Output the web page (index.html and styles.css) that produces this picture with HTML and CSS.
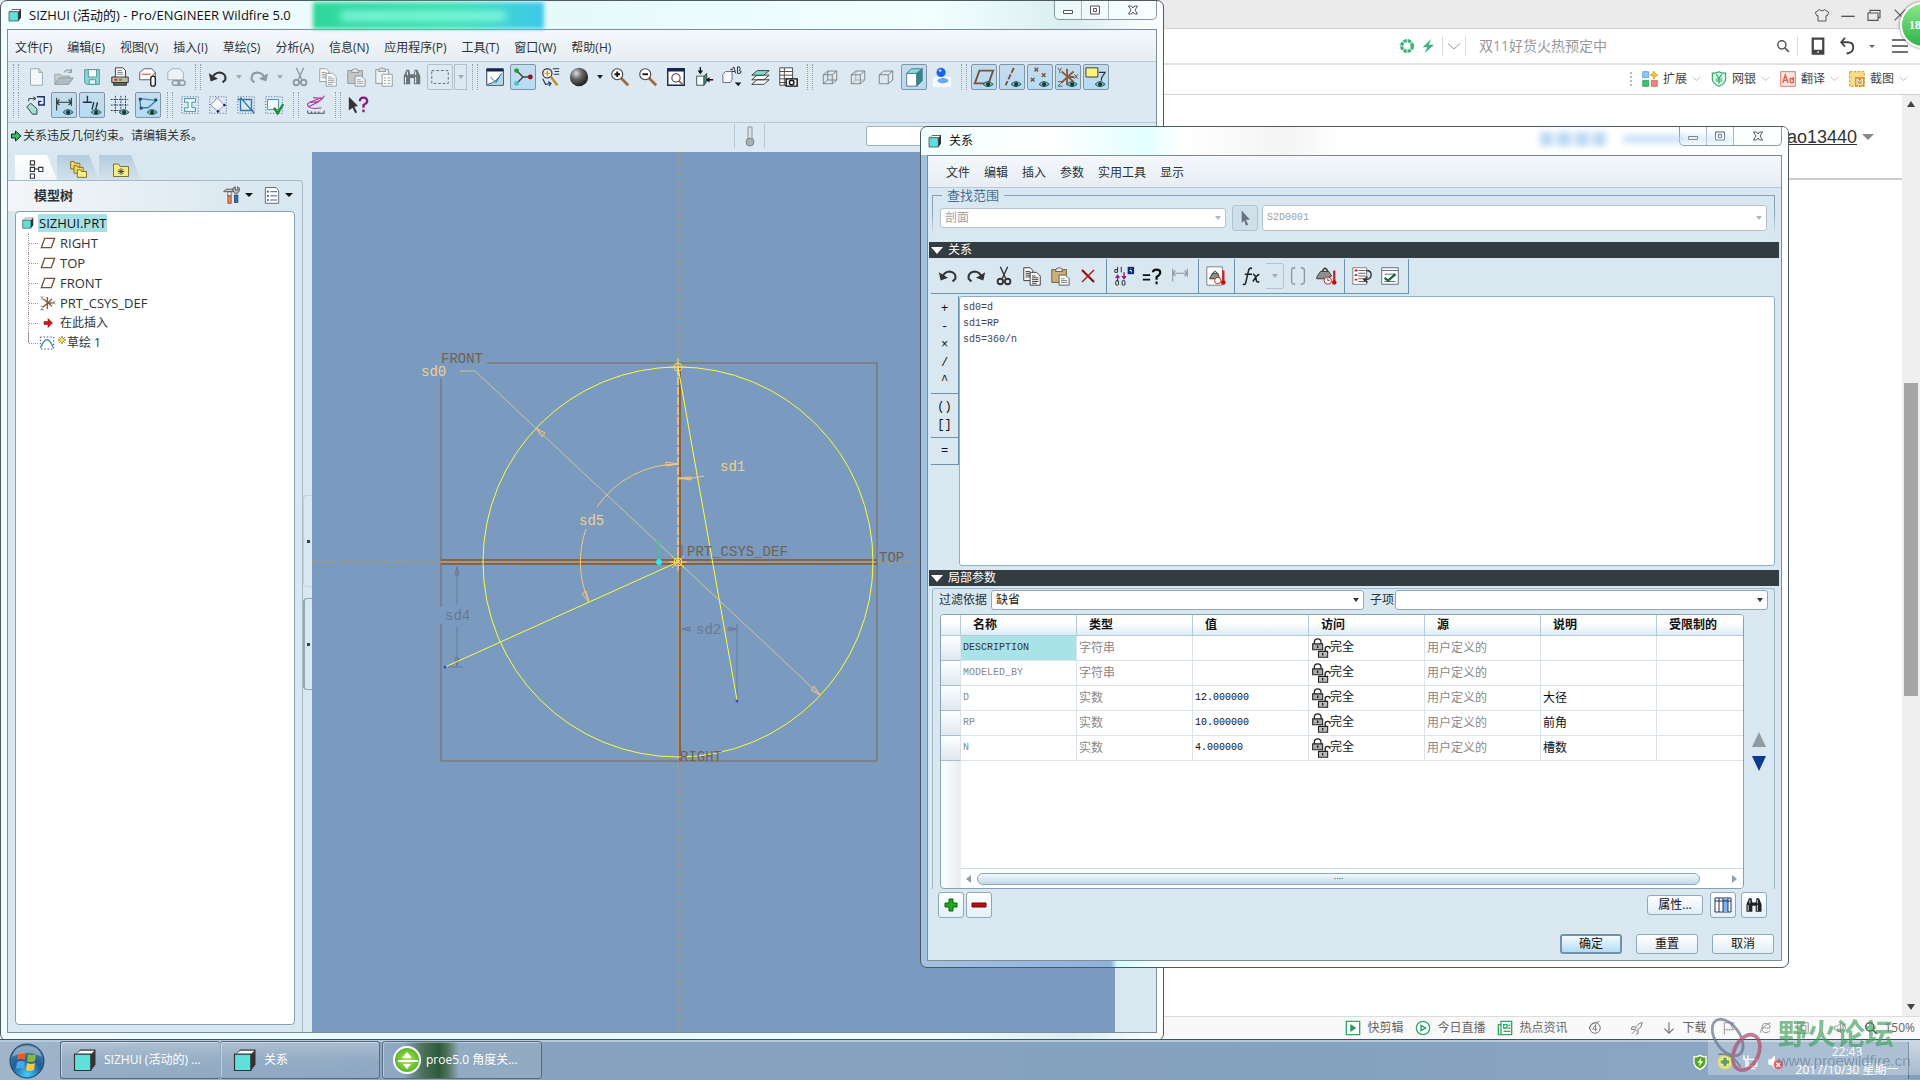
FILE: index.html
```html
<!DOCTYPE html>
<html lang="zh-CN">

<head>
    <meta charset="utf-8">
    <title>SIZHUI - Pro/ENGINEER Wildfire 5.0</title>
    <link rel="stylesheet" href="styles.css">
</head>

<body>
    <!-- icon set, every symbol is drawn on a 24px grid -->
    <svg class="sprite" aria-hidden="true">
        <defs>
            <radialGradient id="g-ball" cx=".35" cy=".3" r=".8">
                <stop offset="0" stop-color="#ddd" />
                <stop offset=".4" stop-color="#666" />
                <stop offset="1" stop-color="#111" />
            </radialGradient>
            <radialGradient id="g-orb" cx=".5" cy=".9" r=".9">
                <stop offset="0" stop-color="#3fd0ff" />
                <stop offset=".5" stop-color="#1f5e96" />
                <stop offset="1" stop-color="#5d86a8" />
            </radialGradient>
            <radialGradient id="g-green" cx=".5" cy=".5" r=".6">
                <stop offset="0" stop-color="#b6ee5c" />
                <stop offset="1" stop-color="#3fa41c" />
            </radialGradient>
        </defs>
        <symbol id="eye" viewBox="0 0 24 24">
            <path d="M11 20q5-6 11 0q-6 5-11 0z" fill="#8db6b6" stroke="#1d4d4d" />
            <circle cx="16.500" cy="20" r="2.200" fill="#0f3b3b" />
        </symbol>
        <symbol id="cube" viewBox="0 0 24 24">
            <path d="M4 7l4-4h13v13l-4 5z" fill="#333" />
            <path d="M4 7l4-3h12l-3 3z" fill="#fff" />
            <path d="M3 7h14v14H3z" fill="#5fe0dc" stroke="#333" />
        </symbol>
        <symbol id="new" viewBox="0 0 24 24">
            <path d="M6 3h9l4 4v14H6zM15 3v4h4" fill="#f4f8fa" stroke="#9aa5ac" />
        </symbol>
        <symbol id="open" viewBox="0 0 24 24">
            <path d="M2 20V9h6l2 2h8v2" fill="#c5ccd0" stroke="#98a2a8" />
            <path d="M2 20l5-7h15l-5 7z" fill="#b3bcc1" stroke="#8d979d" />
            <path d="M12 7q4-5 8-1M20 3v4h-4" fill="none" stroke="#98a2a8" stroke-width="1.500" />
        </symbol>
        <symbol id="save" viewBox="0 0 24 24">
            <path d="M4 4h16v16H6l-2-2z" fill="#8fd6d6" stroke="#4a8f95" />
            <path d="M8 4h9v8H8z" fill="#fff" stroke="#4a8f95" />
            <path d="M9 15h7v5H9z" fill="#dff" stroke="#4a8f95" />
        </symbol>
        <symbol id="print" viewBox="0 0 24 24">
            <path d="M7 12V2h8l3 3v7" fill="#fff" stroke="#333" />
            <path d="M9 5h5M9 7h6M9 9h6" stroke="#777" />
            <path d="M3 12h18v6H3z" fill="#c3b9a2" stroke="#333" />
            <path d="M5 18h14v3H5z" fill="#6c6450" stroke="#333" />
            <path d="M6 15h3" stroke="#c22" stroke-width="2" />
            <path d="M11 15h3" stroke="#2a2" stroke-width="2" />
        </symbol>
        <symbol id="mail" viewBox="0 0 24 24">
            <path d="M3 15V7l5-4h8l4 4v8z" fill="#fff" stroke="#555" />
            <path d="M5 9h10" stroke="#c33" />
            <path d="M20 7l-5 6" stroke="#555" />
            <rect x="15" y="11" width="5" height="11" rx="2.500" fill="#fff" stroke="#222" stroke-width="1.500" />
        </symbol>
        <symbol id="maillink" viewBox="0 0 24 24">
            <path d="M3 15V7l5-4h8l4 4v8z" fill="#edf2f5" stroke="#a2abb1" />
            <rect x="8" y="16" width="8" height="5" rx="2.500" fill="none" stroke="#8d979d" stroke-width="1.500" />
            <rect x="14" y="16" width="8" height="5" rx="2.500" fill="none" stroke="#8d979d" stroke-width="1.500" />
        </symbol>
        <symbol id="undo" viewBox="0 0 24 24">
            <path d="M5 14Q8 7 14 7q7 1 6 8l-3 3" fill="none" stroke="currentColor" stroke-width="2.200" />
            <path d="M2 8l2 9 8-3z" fill="currentColor" />
        </symbol>
        <symbol id="redo" viewBox="0 0 24 24">
            <path d="M19 14Q16 7 10 7q-7 1-6 8l3 3" fill="none" stroke="currentColor" stroke-width="2.200" />
            <path d="M22 8l-2 9-8-3z" fill="currentColor" />
        </symbol>
        <symbol id="cut" viewBox="0 0 24 24">
            <path d="M8 2l6 13M16 2l-6 13" stroke="currentColor" stroke-width="1.500" />
            <circle cx="8" cy="18" r="3" class="tint" />
            <circle cx="16" cy="18" r="3" class="tint" />
        </symbol>
        <symbol id="copy" viewBox="0 0 24 24">
            <path d="M3 3h7l3 3v11H3z" fill="#fff" stroke="currentColor" />
            <path d="M5 7h5M5 9h6M5 11h6M5 13h6" stroke="currentColor" />
            <path d="M10 8h7l4 4v10H10z" fill="#fff" stroke="currentColor" />
            <path d="M12 12h4M12 14h7M12 16h7M12 18h7M12 20h5" stroke="currentColor" />
        </symbol>
        <symbol id="paste" viewBox="0 0 24 24">
            <path d="M3 5h16v14H3z" fill="#c9b074" stroke="#655d44" />
            <path d="M7 7q0-4 4-4t4 4z" fill="#eee" stroke="#555" />
            <path d="M11 11h7l4 4v7H11z" fill="#fff" stroke="#555" />
            <path d="M13 15h4M13 17h7M13 19h7" stroke="#777" />
        </symbol>
        <symbol id="pastespecial" viewBox="0 0 24 24">
            <path d="M3 4h14v15H3z" fill="#f0f3f5" stroke="#8d979d" />
            <path d="M6 6q0-4 4-4t4 4z" fill="#ddd" stroke="#8d979d" />
            <path d="M10 9h11v13H10z" fill="#fff" stroke="#8d979d" />
            <path d="M12 13h2M12 16h2M12 19h2M16 13h3M16 16h3M16 19h3" stroke="#8d979d" />
        </symbol>
        <symbol id="find" viewBox="0 0 24 24">
            <path d="M3 20v-9l3-7h3l1 5h4l1-5h3l3 7v9h-7v-7h-4v7z" fill="currentColor" />
            <path d="M5 12v7M16 12v7M7 6v4M16 6v4" stroke="#fff" />
        </symbol>
        <symbol id="selbox" viewBox="0 0 24 24">
            <path d="M3 5h18v14H3z" fill="none" stroke="#5c666c" stroke-dasharray="3 2" />
        </symbol>
        <symbol id="sketch" viewBox="0 0 24 24">
            <path d="M3 3h18v18H3z" fill="#fff" stroke="#15254d" />
            <path d="M3 3h18v3H3z" fill="#15254d" />
            <path d="M4 20Q15 17 20 7v13z" fill="#a8d8ec" />
            <path d="M7 12l6 6 6-10M4 20q9-2 12-8" fill="none" stroke="#235f8c" />
        </symbol>
        <symbol id="nodes" viewBox="0 0 24 24">
            <path d="M5 5l7 7h8M5 19l7-7" fill="none" stroke="#444" stroke-width="1.500" />
            <circle cx="5" cy="5" r="2.600" fill="#1d9f3c" />
            <circle cx="5" cy="19" r="2.600" fill="#3fc7c7" />
            <circle cx="20" cy="12" r="2.600" fill="#991111" />
        </symbol>
        <symbol id="look" viewBox="0 0 24 24">
            <circle cx="8" cy="8" r="5" fill="#f6fafc" stroke="#444" stroke-width="1.500" />
            <path d="M8 5v6M5 8h6" stroke="#d39a26" stroke-width="1.500" />
            <path d="M12 12l7 9" stroke="#b98a2a" stroke-width="2.500" />
            <path d="M14 3h7M16 6h5M15 9h6M3 14l3 6 6-1M9 17l3 2-2 3" stroke="#223a66" fill="none" stroke-width="1.300" />
        </symbol>
        <symbol id="sphere" viewBox="0 0 24 24">
            <circle cx="12" cy="12" r="10" fill="url(#g-ball)" />
        </symbol>
        <symbol id="zoomin" viewBox="0 0 24 24">
            <path d="M13 13l8 8" stroke="#9a6a42" stroke-width="3" />
            <circle cx="9" cy="9" r="6" fill="#fff" stroke="#444" stroke-width="1.200" />
            <path d="M6 9h6M9 6v6" stroke="#111" stroke-width="2" />
        </symbol>
        <symbol id="zoomout" viewBox="0 0 24 24">
            <path d="M13 13l8 8" stroke="#9a6a42" stroke-width="3" />
            <circle cx="9" cy="9" r="6" fill="#fff" stroke="#444" stroke-width="1.200" />
            <path d="M6 9h6" stroke="#111" stroke-width="2" />
        </symbol>
        <symbol id="fit" viewBox="0 0 24 24">
            <path d="M3 3h18v18H3z" fill="#fff" stroke="#15254d" stroke-width="1.500" />
            <path d="M3 3h18v3H3z" fill="#15254d" />
            <path d="M15 16l4 4" stroke="#9a6a42" stroke-width="2" />
            <circle cx="12" cy="13" r="4.500" fill="#fff" stroke="#444" stroke-width="1.200" />
        </symbol>
        <symbol id="orient" viewBox="0 0 24 24">
            <path d="M4 11h8v10H4z" fill="#eff" stroke="#444" />
            <path d="M12 11l3-3v9l-3 4z" fill="#3b9189" stroke="#444" />
            <path d="M8 1v7M22 15h-6" stroke="#111" stroke-width="1.500" />
            <path d="M5 5h6l-3 4zM18 12v6l-4-3z" fill="#111" />
        </symbol>
        <symbol id="views" viewBox="0 0 24 24">
            <path d="M2 9l3-3h7v9l-2 3H2z" fill="#f6fafc" stroke="#667" />
            <path d="M12 3l2-2 2 7M12 6h3M18 1v7h3l1-2-2-1 1-2-1-2zM10 4h3" fill="none" stroke="#222" />
            <path d="M15 18h7l-3 4z" fill="#111" />
        </symbol>
        <symbol id="layers" viewBox="0 0 24 24">
            <path d="M3 20l6-5h13l-6 5zM3 15l6-5h13l-6 5z" fill="#fff" stroke="#333" />
            <path d="M3 10l6-5h13l-6 5z" fill="#7fdccf" stroke="#333" />
        </symbol>
        <symbol id="capture" viewBox="0 0 24 24">
            <path d="M3 2h14v19H3zM3 6h14M3 10h14M3 14h14M3 18h14M8 2v19" fill="#fff" stroke="#444" />
            <path d="M10 14h12v8H10z" fill="#eee" stroke="#111" stroke-width="1.500" />
            <circle cx="16" cy="18" r="2.500" fill="#fff" stroke="#111" stroke-width="1.500" />
        </symbol>
        <symbol id="wire1" viewBox="0 0 24 24">
            <path d="M3 9h12v12H3zM9 4h12v12H9zM3 9l6-5M15 9l6-5M15 21l6-5M3 21l6-5" fill="none" stroke="#666" />
        </symbol>
        <symbol id="wire2" viewBox="0 0 24 24">
            <path d="M3 9h12v12H3zM3 9l6-5h12v12l-6 5M15 9l6-5" fill="none" stroke="#666" />
            <path d="M9 4v12h12M3 21l6-5" fill="none" stroke="#999" />
        </symbol>
        <symbol id="wire3" viewBox="0 0 24 24">
            <path d="M3 9h12v12H3zM3 9l6-5h12v12l-6 5M15 9l6-5" fill="none" stroke="#666" />
        </symbol>
        <symbol id="shaded" viewBox="0 0 24 24">
            <path d="M4 8h11v14H4z" fill="#fff" stroke="#578" />
            <path d="M4 8l5-5h12l-6 5z" fill="#7fe0e0" stroke="#578" />
            <path d="M15 8l6-5v13l-6 6z" fill="#2f8787" stroke="#578" />
        </symbol>
        <symbol id="ball" viewBox="0 0 24 24">
            <path d="M2 12h20v11H2z" fill="#f5f9fb" />
            <ellipse cx="13" cy="16" rx="6" ry="3" fill="#6ea7ef" />
            <circle cx="11" cy="7" r="5" fill="#1b62e8" />
            <circle cx="10" cy="5" r="1.500" fill="#bcd6ff" />
        </symbol>
        <symbol id="plane" viewBox="0 0 24 24">
            <path d="M7 5h15l-5 14H2z" fill="none" stroke="#7c503a" stroke-width="2" />
        </symbol>
        <symbol id="axis" viewBox="0 0 24 24">
            <path d="M14 2L5 21" stroke="#7c503a" stroke-width="2" stroke-dasharray="6 2" />
        </symbol>
        <symbol id="points" viewBox="0 0 24 24">
            <path d="M6 2l4 4M10 2L6 6M14 8l4 4M18 8l-4 4M2 13l4 4M6 13l-4 4" stroke="#7c503a" stroke-width="1.500" />
        </symbol>
        <symbol id="csys" viewBox="0 0 24 24">
            <path d="M11 3v18M5 6l13 11M18 6L5 18M11 12h8" stroke="#8a5a3f" stroke-width="2" />
            <path d="M1 2l2 3 2-3M3 5v3M19 9l4 5M23 9l-4 5M1 17h5l-5 5h5" fill="none" stroke="#555" />
        </symbol>
        <symbol id="note" viewBox="0 0 24 24">
            <path d="M1 2h13v10H1z" fill="#f8f47c" stroke="#333" />
            <path d="M15 7h7l-4 6v3" fill="none" stroke="#333" stroke-width="1.300" />
        </symbol>
        <symbol id="shapes" viewBox="0 0 24 24">
            <path d="M13 3h8v9h-6v-4h3" fill="none" stroke="#1d2f6c" stroke-width="1.500" />
            <path d="M2 14l4-4 7 6v6H8z" fill="#a8e0cf" stroke="#234" />
            <path d="M4 8V5h7M9 3l3 2-3 2" fill="none" stroke="#333" />
        </symbol>
        <symbol id="dims" viewBox="0 0 24 24">
            <path d="M4 4v14M20 4v9M4 9h16M7 6L4 9l3 3M17 6l3 3-3 3" fill="none" stroke="currentColor" stroke-width="1.200" />
        </symbol>
        <symbol id="constr" viewBox="0 0 24 24">
            <path d="M7 2v7M2 9h10M12 17l2-8M16 17l2-8" stroke="#234" stroke-width="1.500" />
        </symbol>
        <symbol id="grid" viewBox="0 0 24 24">
            <path d="M7 2v19M13 2v19M18 2v15M2 6h19M2 12h19M2 18h10" stroke="#1d2f6c" stroke-dasharray="2 1" />
        </symbol>
        <symbol id="vertex" viewBox="0 0 24 24">
            <path d="M3 5l18 2-9 8H4z" fill="none" stroke="#3c7fae" stroke-width="1.500" />
            <path d="M2 4h3v3H2zM19 5h3v3h-3zM3 14h3v3H3z" fill="#1d3f6c" />
        </symbol>
        <symbol id="sec1" viewBox="0 0 24 24">
            <path d="M3 3h18v18H3z" fill="none" stroke="#2a4a8a" stroke-dasharray="1 2" />
            <path d="M6 5h12v4h-4v6h4v4H6v-4h4V9H6z" fill="#eefafa" stroke="#3a9494" />
        </symbol>
        <symbol id="sec2" viewBox="0 0 24 24">
            <path d="M3 3h18v18H3z" fill="none" stroke="#2a4a8a" stroke-dasharray="1 2" />
            <path d="M11 4l8 8-7 7-8-7z" fill="#f4f8fa" stroke="#889" />
            <circle cx="19" cy="12" r="1.500" fill="#226" />
            <circle cx="12" cy="19" r="1.500" fill="#226" />
        </symbol>
        <symbol id="sec3" viewBox="0 0 24 24">
            <path d="M3 3h18v18H3z" fill="none" stroke="#2a4a8a" stroke-dasharray="1 2" />
            <path d="M6 4v14h14M6 4l15 17M3 6h15v12" fill="none" stroke="#2f78ae" stroke-width="1.500" />
        </symbol>
        <symbol id="sec4" viewBox="0 0 24 24">
            <path d="M3 3h18v18H3z" fill="none" stroke="#2a4a8a" stroke-dasharray="1 2" />
            <path d="M5 6h12v11H5z" fill="#f4fbfb" stroke="#3a9494" />
            <path d="M12 15l4 6 6-10" fill="none" stroke="#1f8a2d" stroke-width="2.500" />
        </symbol>
        <symbol id="curve" viewBox="0 0 24 24">
            <path d="M21 2q-3 7-12 7t-5 5q4 3 14 1M9 4l10 1M5 9l13-5M4 14l12-6" fill="none" stroke="#b23a94" stroke-width="1.200" />
            <path d="M3 18v3h18v-3M7 19v2M11 19v2M15 19v2" fill="none" stroke="#445" />
        </symbol>
        <symbol id="help" viewBox="0 0 24 24">
            <path d="M2 3l10 10-4 1 3 6-2 1-3-6-4 3z" fill="#333" />
            <path d="M14 8q0-4 4-4t4 4q0 2-4 4v3M18 17v3" fill="none" stroke="#8a1c7c" stroke-width="2.500" />
        </symbol>
        <symbol id="thermo" viewBox="0 0 24 24">
            <path d="M10 3h4v12h-4z" fill="#dde3e7" stroke="#8d979d" />
            <circle cx="12" cy="18" r="4" fill="#a8b0b5" stroke="#7d878d" />
        </symbol>
        <symbol id="pointer" viewBox="0 0 24 24">
            <path d="M8 3l10 11-5 0 3 6-3 1-2-6-3 3z" fill="#66727d" />
        </symbol>
        <symbol id="t-tree" viewBox="0 0 24 24">
            <path d="M4 2h5v5H4zM4 10h5v5H4zM4 18h5v5H4zM14 10h5v5h-5zM9 12h5" fill="#fff" stroke="#333" stroke-width="1.300" />
        </symbol>
        <symbol id="t-folders" viewBox="0 0 24 24">
            <path d="M2 3h4l1 2h6v7H2z" fill="#f2dc62" stroke="#6b5d1a" />
            <path d="M6 8h4l1 2h6v7H6z" fill="#f2dc62" stroke="#6b5d1a" />
            <path d="M10 13h4l1 2h6v7H10z" fill="#f8ec8c" stroke="#6b5d1a" />
        </symbol>
        <symbol id="t-fav" viewBox="0 0 24 24">
            <path d="M3 6h6l2 3h10v12H3z" fill="#f8ec7c" stroke="#6b5d1a" />
            <path d="M12 11v8M8 15h8M9 12l6 6M15 12l-6 6" stroke="#236" />
        </symbol>
        <symbol id="hammer" viewBox="0 0 24 24">
            <path d="M7 8h4v5H7z" fill="#fff" stroke="#555" />
            <path d="M7 13h4v9H7z" fill="#f08a3c" stroke="#945" />
            <path d="M2 8l3-3h9v3z" fill="#ccc" stroke="#444" />
            <path d="M15 12h4v9h-4z" fill="#2f6fc4" stroke="#246" />
            <path d="M13 4q0 6 4 6t4-6l-2-2v4h-3V2z" fill="#bbb" stroke="#444" />
        </symbol>
        <symbol id="settings" viewBox="0 0 24 24">
            <path d="M4 3h13l3 4v15H4z" fill="#f8fbff" stroke="#556" />
            <path d="M10 8h8M10 13h8M10 18h8" stroke="#347" />
            <path d="M6 7h2v2H6zM6 12h2v2H6zM6 17h2v2H6z" fill="#347" />
        </symbol>
        <symbol id="insert" viewBox="0 0 24 24">
            <path d="M4 9h8V3l9 9-9 9v-6H4z" fill="#d3191b" stroke="#6b0c0c" />
        </symbol>
        <symbol id="sketchfeat" viewBox="0 0 24 24">
            <path d="M2 3h20v18H2z" fill="none" stroke="#2a4a8a" stroke-dasharray="2 3" stroke-width="1.500" />
            <path d="M3 18q9-22 18 0" fill="none" stroke="#2683a8" stroke-width="2" />
        </symbol>
        <symbol id="star" viewBox="0 0 24 24">
            <path d="M12 0v24M0 12h24M4 4l16 16M20 4L4 20" stroke="#5d5818" stroke-width="3" />
            <circle cx="12" cy="12" r="6" fill="#f8ee30" />
        </symbol>
        <symbol id="arrow" viewBox="0 0 24 24">
            <path d="M3 8h8V2l11 10-11 10v-6H3z" fill="#35c25d" stroke="#123" stroke-width="2" />
        </symbol>
        <symbol id="delete" viewBox="0 0 24 24">
            <path d="M4 4l16 16" stroke="#8f1414" stroke-width="3" />
            <path d="M20 4L4 20" stroke="#a41c1c" stroke-width="2" />
        </symbol>
        <symbol id="toggle" viewBox="0 0 24 24">
            <path d="M16 2h7v8h-7z" fill="#0c2c78" />
            <path d="M19 4h1M18 6h2v2" stroke="#fff" fill="none" />
            <path d="M5 2v6H2V5h3M9 2v6" fill="none" stroke="#222" />
            <path d="M5 18v-6M12 8v6" stroke="#8a1c8c" stroke-width="1.500" />
            <path d="M2 14l3-4 3 4zM9 12h6l-3 4z" fill="#8a1c8c" />
            <rect x="3" y="17" width="3" height="5" rx="1" fill="none" stroke="#222" />
            <rect x="10" y="17" width="3" height="5" rx="1" fill="none" stroke="#222" />
        </symbol>
        <symbol id="evaluate" viewBox="0 0 24 24">
            <path d="M2 11h8M2 16h8" stroke="#111" stroke-width="2" />
            <path d="M13 8q0-3 4-3t4 3-4 5v3M17 18v3" fill="none" stroke="#111" stroke-width="2.400" />
        </symbol>
        <symbol id="units" viewBox="0 0 24 24">
            <path d="M2 13l4-6h9l3 5-5 3H2z" fill="#8f8f8b" stroke="#333" />
            <path d="M8 7q3-7 6 0" fill="none" stroke="#333" stroke-width="1.500" />
            <circle cx="14" cy="17" r="4" fill="#fff" stroke="#a22" />
            <path d="M14 14v3h2" stroke="#a22" fill="none" />
            <path d="M21 6v13" stroke="#c22" stroke-width="2.500" />
            <circle cx="21" cy="19" r="2.500" fill="#b11" />
        </symbol>
        <symbol id="unitsdoc" viewBox="0 0 24 24">
            <path d="M2 2h17v20H2z" fill="#fff" stroke="#777" />
            <path d="M5 15l3-6h6l2 6z" fill="#8f8f8b" stroke="#333" />
            <path d="M9 9q2-5 4 0" fill="none" stroke="#333" />
            <circle cx="14" cy="17" r="3.500" fill="#fff" stroke="#a22" />
            <path d="M20 6v12" stroke="#c22" stroke-width="2.500" />
            <circle cx="20" cy="19" r="2.500" fill="#b11" />
        </symbol>
        <symbol id="fx" viewBox="0 0 24 24">
            <path d="M12 4q-3-2-4 3L5 20q-1 2-3 1M4 10h8M13 10q3 0 4 8 1 1 3 0M20 10q-3 1-7 8" fill="none" stroke="#222" stroke-width="1.700" />
        </symbol>
        <symbol id="brackets" viewBox="0 0 24 24">
            <path d="M9 3q-4 0-4 3v12q0 3 4 3M15 3q4 0 4 3v12q0 3-4 3" fill="none" stroke="#90989d" stroke-width="1.500" />
        </symbol>
        <symbol id="sort" viewBox="0 0 24 24">
            <path d="M2 3h15v18H2z" fill="#fff" stroke="#777" />
            <path d="M4 6h3M4 11h3M4 16h3" stroke="#c22" stroke-width="2" />
            <path d="M8 6h8M8 9h8M8 12h8M8 15h8M8 18h8" stroke="#555" />
            <path d="M17 6q5 0 5 5t-7 5M18 13l-4 3 4 3" fill="none" stroke="#333" stroke-width="1.500" />
        </symbol>
        <symbol id="verify" viewBox="0 0 24 24">
            <path d="M3 3h18v18H3zM3 6h18M6 10h12M6 18h12" fill="#fff" stroke="#567" />
            <path d="M6 14l4 3 8-7" fill="none" stroke="#14683a" stroke-width="2.500" />
        </symbol>
        <symbol id="lock" viewBox="0 0 24 24">
            <path d="M4 7V5q0-4 4-4t4 4v2" fill="none" stroke="#222" stroke-width="1.600" />
            <path d="M2 7h12v7H2z" fill="#aaa" stroke="#222" stroke-width="1.300" />
            <path d="M8 9v3" stroke="#111" stroke-width="1.500" />
            <path d="M17 16v-3q0-3 3-3t3 3" fill="none" stroke="#222" stroke-width="1.600" />
            <path d="M9 16h11v7H9z" fill="#bbb" stroke="#222" stroke-width="1.300" />
            <path d="M14 18v3" stroke="#111" stroke-width="1.500" />
        </symbol>
        <symbol id="plus" viewBox="0 0 24 24">
            <path d="M10 6h4v4h4v4h-4v4h-4v-4H6v-4h4z" fill="#22a722" stroke="#0b640f" />
        </symbol>
        <symbol id="minus" viewBox="0 0 24 24">
            <path d="M5 10h14v4H5z" fill="#b80f14" stroke="#6b0808" />
        </symbol>
        <symbol id="cols" viewBox="0 0 24 24">
            <path d="M4 5h16v14H4z" fill="#fff" stroke="#235" />
            <path d="M12 5h5v14h-5z" fill="#7ab3ee" />
            <path d="M4 8h16M8 5v14M12 5v14M17 5v14" stroke="#235" />
        </symbol>
        <symbol id="w-min" viewBox="0 0 24 24">
            <path d="M3 13h18v6H3z" fill="#fff" stroke="#555" stroke-width="2" />
        </symbol>
        <symbol id="w-max" viewBox="0 0 24 24">
            <path d="M3 4h18v16H3zM9 9h6v6H9z" fill="#fff" stroke="#555" stroke-width="2" />
        </symbol>
        <symbol id="w-close" viewBox="0 0 24 24">
            <path d="M3 4h6l3 4 3-4h6l-5 8 5 8h-6l-3-4-3 4H3l5-8z" fill="#fff" stroke="#555" stroke-width="2" />
        </symbol>
        <symbol id="shirt" viewBox="0 0 24 24">
            <path d="M8 4q4 4 8 0l6 4-2 5h-2v8H6v-8H4L2 8z" fill="none" stroke="#555" stroke-width="1.500" />
        </symbol>
        <symbol id="b-min" viewBox="0 0 24 24">
            <path d="M2 14h20" stroke="#555" stroke-width="2" />
        </symbol>
        <symbol id="b-max" viewBox="0 0 24 24">
            <path d="M3 9h15v11H3zM6 9V5h15v11h-3" fill="none" stroke="#555" stroke-width="1.700" />
        </symbol>
        <symbol id="b-close" viewBox="0 0 24 24">
            <path d="M4 4l16 16M20 4L4 20" stroke="#555" stroke-width="1.700" />
        </symbol>
        <symbol id="aperture" viewBox="0 0 24 24">
            <circle cx="12" cy="12" r="8" fill="none" stroke="#3db37a" stroke-width="5" stroke-dasharray="5 1.300" />
        </symbol>
        <symbol id="bolt" viewBox="0 0 24 24">
            <path d="M17 1L4 14h7l-4 9 14-13h-8z" fill="#3db37a" />
        </symbol>
        <symbol id="chev" viewBox="0 0 24 24">
            <path d="M2 8l10 9 10-9" fill="none" stroke="#999" stroke-width="1.700" />
        </symbol>
        <symbol id="search" viewBox="0 0 24 24">
            <circle cx="10" cy="10" r="7" fill="none" stroke="#555" stroke-width="2.500" />
            <path d="M15 15l7 7" stroke="#555" stroke-width="3" />
        </symbol>
        <symbol id="phone" viewBox="0 0 24 24">
            <path d="M5 2h14v20H5z" fill="none" stroke="#444" stroke-width="3" />
            <path d="M5 17h14v5H5z" fill="#444" />
            <path d="M11 20h2" stroke="#fff" stroke-width="2" />
        </symbol>
        <symbol id="back" viewBox="0 0 24 24">
            <path d="M3 7h9q7 0 7 7t-9 8M8 1L3 7l5 6" fill="none" stroke="#444" stroke-width="2.500" />
        </symbol>
        <symbol id="burger" viewBox="0 0 24 24">
            <path d="M0 3h24M0 12h24M0 21h24" stroke="#444" stroke-width="2.500" />
        </symbol>
        <symbol id="ext" viewBox="0 0 24 24">
            <path d="M1 1h9v9H1z" fill="#8ec8f4" stroke="#4a8ac0" />
            <path d="M1 14h9v9H1z" fill="#3cc46a" stroke="#1f9048" />
            <path d="M14 14h9v9h-9z" fill="#f0847c" stroke="#c8504a" />
            <path d="M18 0l2 4 4 2-4 2-2 4-2-4-4-2 4-2z" fill="#f4c430" stroke="#c89410" />
        </symbol>
        <symbol id="bank" viewBox="0 0 24 24">
            <path d="M12 1q5 3 10 2v9q0 7-10 11Q2 19 2 12V3q5 1 10-2z" fill="#e0f6ea" stroke="#2fa866" stroke-width="1.700" />
            <path d="M8 5l4 6 4-6M12 11v8M7 12h10M7 15h10" fill="none" stroke="#2fa866" stroke-width="1.700" />
        </symbol>
        <symbol id="trans" viewBox="0 0 24 24">
            <path d="M1 1h22v22H1z" fill="#fbe3df" stroke="#d98074" stroke-width="1.500" />
            <path d="M4 18L8 6l4 12M5 14h6M20 9v9M20 13q-5-4-5 1t5 3" fill="none" stroke="#dc5a48" stroke-width="2" />
        </symbol>
        <symbol id="shot" viewBox="0 0 24 24">
            <path d="M1 1h22v22H1z" fill="#f7dc8a" stroke="#cf9b34" stroke-dasharray="4 2" stroke-width="1.500" />
            <path d="M9 9h14v14H9z" fill="#d9992e" />
            <path d="M12 12v8h8v-8l-4 4z" fill="none" stroke="#fff" stroke-width="1.500" />
        </symbol>
        <symbol id="s-cut" viewBox="0 0 24 24">
            <path d="M2 2h20v20H2z" fill="#fff" stroke="#2fa866" stroke-width="2" />
            <path d="M8 6l9 6-9 6z" fill="#1f9a58" />
        </symbol>
        <symbol id="s-live" viewBox="0 0 24 24">
            <circle cx="12" cy="12" r="10" fill="#fff" stroke="#2fa866" stroke-width="2" />
            <path d="M9 8l7 4-7 4z" fill="none" stroke="#1f9a58" stroke-width="2" />
        </symbol>
        <symbol id="s-news" viewBox="0 0 24 24">
            <path d="M6 2h16v20H2V7h4zM6 7v15M10 7h5v5h-5zM17 8h3M17 12h3M10 17h10" fill="none" stroke="#2fa866" stroke-width="2" />
        </symbol>
        <symbol id="s-speed" viewBox="0 0 24 24">
            <circle cx="12" cy="12" r="9" fill="none" stroke="#777" stroke-width="1.700" />
            <path d="M2 14Q4 3 20 1M13 6l-5 8h8M13 6v12" fill="none" stroke="#777" stroke-width="1.500" />
        </symbol>
        <symbol id="s-rocket" viewBox="0 0 24 24">
            <path d="M21 3q-7 0-13 11l3 3Q21 11 21 3zM9 10H4l-2 4 6 1M14 16v5l-4 2M3 22l5-5" fill="none" stroke="#777" stroke-width="1.700" />
        </symbol>
        <symbol id="s-down" viewBox="0 0 24 24">
            <path d="M12 2v19M4 13l8 8 8-8" fill="none" stroke="#777" stroke-width="2" />
        </symbol>
        <symbol id="s-flag" viewBox="0 0 24 24">
            <path d="M4 23V3h16l-4 6 4 6H4" fill="none" stroke="#999" stroke-width="1.700" />
        </symbol>
        <symbol id="s-ie" viewBox="0 0 24 24">
            <path d="M5 12h14q0-8-7-8t-7 8 7 8q5 0 7-4M3 20Q0 12 20 3" fill="none" stroke="#999" stroke-width="1.700" />
        </symbol>
        <symbol id="s-win" viewBox="0 0 24 24">
            <path d="M3 3h18v18H3zM9 8h8v8H9z" fill="none" stroke="#999" stroke-width="1.700" />
        </symbol>
        <symbol id="s-vol" viewBox="0 0 24 24">
            <path d="M3 9h4l6-5v16l-6-5H3zM16 8q3 4 0 8M19 5q5 7 0 14" fill="none" stroke="#999" stroke-width="1.700" />
        </symbol>
        <symbol id="orb" viewBox="0 0 36 36">
            <circle cx="18" cy="18" r="17" fill="url(#g-orb)" stroke="#1d4064" />
            <path d="M9 11q4-3 8-1l-1 7q-4-2-8 0z" fill="#e65e27" />
            <path d="M19 11q4 2 8 0l-1 7q-4 2-8 0z" fill="#86bb3b" />
            <path d="M8 19q4-2 8 0l-1 7q-4-2-8 0z" fill="#4ba6e6" />
            <path d="M18 20q4 2 8 0l-1 7q-4 2-8 0z" fill="#f9c846" />
            <path d="M3 14Q6 3 18 3t15 11Q18 6 3 14z" fill="#fff" opacity=".35" />
        </symbol>
        <symbol id="browser" viewBox="0 0 28 28">
            <circle cx="14" cy="14" r="13" fill="url(#g-green)" stroke="#fff" stroke-width="2" />
            <path d="M5 15h20" stroke="#fff" stroke-width="2" />
            <path d="M9 12l5-6 5 6zM10 18h8l-4 5z" fill="#fff" />
        </symbol>
        <symbol id="tr-shield" viewBox="0 0 24 24">
            <path d="M12 2q5 3 9 2v8q0 7-9 11-9-4-9-11V4q4 1 9-2z" fill="#55a51c" stroke="#fff" stroke-width="2" />
            <path d="M14 6l-6 7h4l-2 6 7-8h-4z" fill="#fff" />
        </symbol>
        <symbol id="tr-plus" viewBox="0 0 24 24">
            <circle cx="12" cy="12" r="11" fill="#d9d82c" />
            <path d="M9 5h6v4h4v6h-4v4H9v-4H5V9h4z" fill="#2d7a1c" stroke="#fff" />
        </symbol>
        <symbol id="tr-net" viewBox="0 0 24 24">
            <path d="M9 8h13v10H9zM12 22h8M16 18v4M3 2v6h6V2M6 8v11h3" fill="none" stroke="#fff" stroke-width="2" />
        </symbol>
        <symbol id="tr-vol" viewBox="0 0 24 24">
            <path d="M2 8h4l6-6v20l-6-6H2z" fill="#fff" />
            <circle cx="17" cy="16" r="7" fill="#d02a2a" />
            <path d="M14 13l6 6M20 13l-6 6" stroke="#fff" stroke-width="2" />
        </symbol>
    </svg>

    <div class="desktop">

        <!-- browser, behind the other windows -->
        <section class="browser">
            <div class="b-title">
                <svg class="i16"><use href="#shirt" /></svg>
                <svg class="i16"><use href="#b-min" /></svg>
                <svg class="i16"><use href="#b-max" /></svg>
                <svg class="i16"><use href="#b-close" /></svg>
            </div>
            <div class="b-address">
                <svg class="i16"><use href="#aperture" /></svg>
                <svg class="i16"><use href="#bolt" /></svg>
                <span class="b-chev"><svg class="i14"><use href="#chev" /></svg></span>
                <input class="b-search" type="text" placeholder="双11好货火热预定中" aria-label="搜索">
                <svg class="i14"><use href="#search" /></svg>
                <span class="b-line"></span>
                <svg class="i18"><use href="#phone" /></svg>
                <svg class="i18"><use href="#back" /></svg>
                <i class="dd dd-grey"></i>
                <svg class="i16"><use href="#burger" /></svg>
            </div>
            <div class="b-marks">
                <span class="b-dots"></span>
                <a href="#"><svg class="i16"><use href="#ext" /></svg>扩展<svg class="i9"><use href="#chev" /></svg></a>
                <a href="#"><svg class="i16"><use href="#bank" /></svg>网银<svg class="i9"><use href="#chev" /></svg></a>
                <a href="#"><svg class="i16"><use href="#trans" /></svg>翻译<svg class="i9"><use href="#chev" /></svg></a>
                <a href="#"><svg class="i16"><use href="#shot" /></svg>截图<svg class="i9"><use href="#chev" /></svg></a>
            </div>
            <div class="b-body">
                <div class="b-page">
                    <div class="b-user"><a href="#">ao13440</a><i class="dd dd-big"></i></div>
                </div>
                <div class="b-scroll">
                    <i class="tri-up"></i>
                    <div class="b-track"><div class="b-thumb"></div></div>
                    <i class="tri-down"></i>
                </div>
            </div>
            <div class="b-status">
                <a href="#"><svg class="i16"><use href="#s-cut" /></svg>快剪辑</a>
                <a href="#"><svg class="i16"><use href="#s-live" /></svg>今日直播</a>
                <a href="#"><svg class="i16"><use href="#s-news" /></svg>热点资讯</a>
                <span class="b-icons">
                    <svg class="i14"><use href="#s-speed" /></svg>
                    <svg class="i14"><use href="#s-rocket" /></svg>
                </span>
                <a href="#"><svg class="i14"><use href="#s-down" /></svg>下载</a>
                <span class="b-tools">
                    <svg class="i14"><use href="#s-flag" /></svg>
                    <svg class="i14"><use href="#s-ie" /></svg>
                    <svg class="i14"><use href="#s-win" /></svg>
                    <svg class="i14"><use href="#s-vol" /></svg>
                </span>
                <span class="b-zoom"><svg class="i14"><use href="#search" /></svg>150%</span>
            </div>
            <div class="bubble">18</div>
        </section>

        <!-- Pro/ENGINEER main window -->
        <section class="win main-win">
            <div class="glass-tab"></div>
            <header class="titlebar">
                <svg class="i16"><use href="#cube" /></svg>
                <span class="title">SIZHUI (活动的) - Pro/ENGINEER Wildfire 5.0</span>
                <div class="winbtns">
                    <button aria-label="最小化"><svg class="i12"><use href="#w-min" /></svg></button>
                    <button aria-label="最大化"><svg class="i12"><use href="#w-max" /></svg></button>
                    <button class="wide" aria-label="关闭"><svg class="i12"><use href="#w-close" /></svg></button>
                </div>
            </header>
            <div class="client">
                <nav class="menubar">
                    <a href="#">文件(F)</a><a href="#">编辑(E)</a><a href="#">视图(V)</a><a href="#">插入(I)</a><a href="#">草绘(S)</a><a href="#">分析(A)</a><a href="#">信息(N)</a><a href="#">应用程序(P)</a><a href="#">工具(T)</a><a href="#">窗口(W)</a><a href="#">帮助(H)</a>
                </nav>
                <div class="toolbars">
                    <div class="toolrow">
                        <i class="grip"></i>
                        <button aria-label="新建"><svg><use href="#new" /></svg></button>
                        <button aria-label="打开"><svg><use href="#open" /></svg></button>
                        <button aria-label="保存"><svg><use href="#save" /></svg></button>
                        <button aria-label="打印"><svg><use href="#print" /></svg></button>
                        <button aria-label="发送"><svg><use href="#mail" /></svg></button>
                        <button aria-label="发送链接"><svg><use href="#maillink" /></svg></button>
                        <i class="grip"></i>
                        <button aria-label="撤消"><svg><use href="#undo" /></svg></button>
                        <i class="drop off"></i>
                        <button class="off" aria-label="重做"><svg><use href="#redo" /></svg></button>
                        <i class="drop off"></i>
                        <button class="off" aria-label="剪切"><svg><use href="#cut" /></svg></button>
                        <button class="off" aria-label="复制"><svg><use href="#copy" /></svg></button>
                        <button class="off fade" aria-label="粘贴"><svg><use href="#paste" /></svg></button>
                        <button class="off" aria-label="选择性粘贴"><svg><use href="#pastespecial" /></svg></button>
                        <button class="off dark" aria-label="查找"><svg><use href="#find" /></svg></button>
                        <button class="boxed" aria-label="选择"><svg><use href="#selbox" /></svg></button>
                        <i class="drop off boxed"></i>
                        <i class="grip"></i>
                        <button aria-label="草绘器"><svg><use href="#sketch" /></svg></button>
                        <button class="on" aria-label="旋转中心"><svg><use href="#nodes" /></svg></button>
                        <button aria-label="定向模式"><svg><use href="#look" /></svg></button>
                        <button aria-label="外观"><svg><use href="#sphere" /></svg></button>
                        <i class="drop"></i>
                        <button aria-label="放大"><svg><use href="#zoomin" /></svg></button>
                        <button aria-label="缩小"><svg><use href="#zoomout" /></svg></button>
                        <button aria-label="重新调整"><svg><use href="#fit" /></svg></button>
                        <button aria-label="重定向"><svg><use href="#orient" /></svg></button>
                        <button aria-label="视图列表"><svg><use href="#views" /></svg></button>
                        <button aria-label="层"><svg><use href="#layers" /></svg></button>
                        <button aria-label="视图管理器"><svg><use href="#capture" /></svg></button>
                        <i class="grip"></i>
                        <button aria-label="线框"><svg class="low-detail"><use href="#wire1" /></svg></button>
                        <button aria-label="隐藏线"><svg class="low-detail"><use href="#wire2" /></svg></button>
                        <button aria-label="无隐藏线"><svg class="low-detail"><use href="#wire3" /></svg></button>
                        <button class="on" aria-label="着色"><svg><use href="#shaded" /></svg></button>
                        <button aria-label="增强"><svg><use href="#ball" /></svg></button>
                        <i class="grip"></i>
                        <button class="on" aria-label="基准平面"><svg><use href="#plane" /><use href="#eye" /></svg></button>
                        <button class="on" aria-label="基准轴"><svg><use href="#axis" /><use href="#eye" /></svg></button>
                        <button class="on" aria-label="基准点"><svg><use href="#points" /><use href="#eye" /></svg></button>
                        <button class="on" aria-label="坐标系"><svg><use href="#csys" /><use href="#eye" /></svg></button>
                        <button class="on" aria-label="注释"><svg><use href="#note" /><use href="#eye" /></svg></button>
                    </div>
                    <div class="toolrow">
                        <i class="grip"></i>
                        <button aria-label="草绘方向"><svg><use href="#shapes" /></svg></button>
                        <button class="on" aria-label="显示尺寸"><svg><use href="#dims" /><use href="#eye" /></svg></button>
                        <button class="on" aria-label="显示约束"><svg><use href="#constr" /><use href="#eye" /></svg></button>
                        <button aria-label="显示栅格"><svg><use href="#grid" /><use href="#eye" /></svg></button>
                        <button class="on" aria-label="显示顶点"><svg><use href="#vertex" /><use href="#eye" /></svg></button>
                        <i class="grip"></i>
                        <button aria-label="着色封闭环"><svg><use href="#sec1" /></svg></button>
                        <button aria-label="加亮开放端"><svg><use href="#sec2" /></svg></button>
                        <button aria-label="重叠几何"><svg><use href="#sec3" /></svg></button>
                        <button aria-label="特征要求"><svg><use href="#sec4" /></svg></button>
                        <i class="grip"></i>
                        <button aria-label="曲率"><svg><use href="#curve" /></svg></button>
                        <i class="grip"></i>
                        <button aria-label="帮助"><svg><use href="#help" /></svg></button>
                    </div>
                </div>
                <div class="message">
                    <svg class="i12"><use href="#arrow" /></svg>
                    <span>关系违反几何约束。请编辑关系。</span>
                    <div class="msg-thermo"><svg class="i24"><use href="#thermo" /></svg></div>
                    <div class="msg-filter"></div>
                </div>
                <div class="workspace">
                    <aside class="side">
                        <div class="tabs">
                            <button class="tab current" aria-label="模型树"><svg class="i20"><use href="#t-tree" /></svg></button>
                            <button class="tab" aria-label="文件夹"><svg class="i20"><use href="#t-folders" /></svg></button>
                            <button class="tab" aria-label="收藏夹"><svg class="i20"><use href="#t-fav" /></svg></button>
                        </div>
                        <div class="panel">
                            <div class="panel-head">
                                <b>模型树</b>
                                <svg class="i20"><use href="#hammer" /></svg><i class="dd"></i>
                                <svg class="i20"><use href="#settings" /></svg><i class="dd"></i>
                            </div>
                            <div class="tree">
                                <div class="root"><svg class="i14"><use href="#cube" /></svg><span>SIZHUI.PRT</span></div>
                                <ul>
                                    <li><svg class="i16"><use href="#plane" /></svg>RIGHT</li>
                                    <li><svg class="i16"><use href="#plane" /></svg>TOP</li>
                                    <li><svg class="i16"><use href="#plane" /></svg>FRONT</li>
                                    <li><svg class="i16"><use href="#csys" /></svg>PRT_CSYS_DEF</li>
                                    <li><svg class="i16 small"><use href="#insert" /></svg>在此插入</li>
                                    <li class="fresh"><svg class="i16"><use href="#sketchfeat" /></svg><svg class="i8"><use href="#star" /></svg>草绘 1</li>
                                </ul>
                            </div>
                        </div>
                    </aside>
                    <div class="splitter"><i></i><i class="low"></i></div>
                    <!-- sketch, the user units are screen pixels -->
                    <svg class="sketch" viewBox="312 152 803 880" preserveAspectRatio="xMinYMin slice">
                        <g class="ref">
                            <path d="M487 363H877V761H441V624M441 607V378" />
                            <path d="M441 560H877M441 564H877M680 367V761" class="thick" />
                            <path d="M682 545v15" />
                        </g>
                        <g class="weak">
                            <path d="M457 566v38M457 627v40M448 667h15M737 624v76M682 629h8M727 629h10" />
                            <path d="M455 575l2-8 2 8zM455 658l2 8 2-8zM690 627l-8 2 8 2zM729 627l8 2-8 2z" />
                        </g>
                        <g class="center">
                            <path d="M678 152V1032M312 562H917" />
                        </g>
                        <path class="bright" d="M678 367V562" />
                        <path class="low" d="M678 562V761M441 562H678" />
                        <g class="geom">
                            <circle cx="678" cy="562" r="195" />
                            <path d="M678 367L737 700M678 562L445 667" />
                        </g>
                        <g class="dim">
                            <path d="M460 371h15L820 695" class="thin" />
                            <path d="M597 507A98 98 0 0 1 678 464M586 529A98 98 0 0 0 589 602" />
                            <path d="M678 479Q692 479 704 476" />
                            <path d="M536 428l9 5-3 4zM820 695l-9-5 3-4zM678 464l-12-2v4zM589 602l-7-8 4-3zM679 478l12 2v-3z" />
                        </g>
                        <g class="node">
                            <circle cx="678" cy="367" r="4" />
                            <path d="M678 358v18M669 367h18" />
                            <circle cx="678" cy="562" r="4" />
                            <path d="M678 553v18M669 562h18M672 556l12 12M684 556l-12 12" />
                        </g>
                        <path d="M659 542V562M656 542h6" stroke="#35d873" />
                        <circle cx="659" cy="562" r="3" fill="#35e6f0" />
                        <circle cx="445" cy="667" r="1.500" fill="#2a52c0" />
                        <circle cx="737" cy="701" r="1.500" fill="#2a52c0" />
                        <g class="lab">
                            <text x="441" y="363">FRONT</text>
                            <text x="687" y="556">PRT_CSYS_DEF</text>
                            <text x="879" y="562">TOP</text>
                            <text x="680" y="761">RIGHT</text>
                        </g>
                        <g class="lab lit">
                            <text x="421" y="376">sd0</text>
                            <text x="720" y="471">sd1</text>
                            <text x="579" y="525">sd5</text>
                        </g>
                        <g class="lab dull">
                            <text x="445" y="620">sd4</text>
                            <text x="696" y="634">sd2</text>
                        </g>
                    </svg>
                    <div class="rightbar"></div>
                </div>
            </div>
        </section>

        <!-- relations dialog -->
        <section class="win dialog">
            <div class="glass-links"></div>
            <header class="titlebar">
                <svg class="i16"><use href="#cube" /></svg>
                <span class="title">关系</span>
                <div class="winbtns">
                    <button aria-label="最小化"><svg class="i12"><use href="#w-min" /></svg></button>
                    <button aria-label="最大化"><svg class="i12"><use href="#w-max" /></svg></button>
                    <button class="wide" aria-label="关闭"><svg class="i12"><use href="#w-close" /></svg></button>
                </div>
            </header>
            <div class="client">
                <nav class="menubar">
                    <a href="#">文件</a><a href="#">编辑</a><a href="#">插入</a><a href="#">参数</a><a href="#">实用工具</a><a href="#">显示</a>
                </nav>
                <fieldset class="scope">
                    <legend>查找范围</legend>
                    <div class="scope-row">
                        <span class="combo combo-type off"><select aria-label="对象类型" disabled><option>剖面</option></select></span>
                        <button class="sq flat" aria-label="选取"><svg class="i20"><use href="#pointer" /></svg></button>
                        <span class="combo combo-name off"><select class="mono" aria-label="对象" disabled><option>S2D0001</option></select></span>
                    </div>
                </fieldset>
                <h2 class="bar">关系</h2>
                <div class="dtools">
                    <div class="dgroup">
                        <button aria-label="撤消"><svg><use href="#undo" /></svg></button>
                        <button aria-label="重做"><svg><use href="#redo" /></svg></button>
                        <button aria-label="剪切"><svg><use href="#cut" /></svg></button>
                        <button aria-label="复制"><svg><use href="#copy" /></svg></button>
                        <button aria-label="粘贴"><svg><use href="#paste" /></svg></button>
                        <button aria-label="删除"><svg class="low-detail"><use href="#delete" /></svg></button>
                    </div>
                    <div class="dgroup">
                        <button aria-label="切换尺寸"><svg><use href="#toggle" /></svg></button>
                        <button aria-label="计算"><svg><use href="#evaluate" /></svg></button>
                        <button class="off" aria-label="显示尺寸"><svg><use href="#dims" /></svg></button>
                    </div>
                    <div class="dgroup">
                        <button aria-label="单位设置"><svg><use href="#unitsdoc" /></svg></button>
                    </div>
                    <div class="dgroup">
                        <button aria-label="插入函数"><svg><use href="#fx" /></svg></button>
                        <i class="drop off framed"></i>
                        <button aria-label="插入参数"><svg><use href="#brackets" /></svg></button>
                        <button aria-label="插入单位"><svg><use href="#units" /></svg></button>
                    </div>
                    <div class="dgroup">
                        <button aria-label="排序"><svg><use href="#sort" /></svg></button>
                        <button aria-label="校验"><svg><use href="#verify" /></svg></button>
                    </div>
                </div>
                <div class="editor">
                    <div class="keys">
                        <div><button>+</button><button>-</button><button>×</button><button>/</button><button>^</button></div>
                        <div><button>()</button><button>[]</button></div>
                        <div><button>=</button></div>
                    </div>
                    <textarea aria-label="关系" spellcheck="false">sd0=d
sd1=RP
sd5=360/n</textarea>
                </div>
                <h2 class="bar">局部参数</h2>
                <div class="params">
                    <div class="filter">
                        <label for="filter-by">过滤依据</label>
                        <span class="combo"><select id="filter-by"><option>缺省</option></select></span>
                        <label for="sub-item" class="sub">子项</label>
                        <span class="combo"><select id="sub-item"><option></option></select></span>
                    </div>
                    <div class="grid-row">
                        <div class="grid">
                            <table>
                                <colgroup>
                                    <col class="c-handle"><col class="c-std"><col class="c-std"><col class="c-std"><col class="c-std"><col class="c-std"><col class="c-std"><col>
                                </colgroup>
                                <thead>
                                    <tr><th></th><th>名称</th><th>类型</th><th>值</th><th>访问</th><th>源</th><th>说明</th><th>受限制的</th></tr>
                                </thead>
                                <tbody>
                                    <tr><td></td><td class="mono sel">DESCRIPTION</td><td>字符串</td><td class="mono val"></td><td class="acc"><svg class="i20"><use href="#lock" /></svg>完全</td><td>用户定义的</td><td class="acc"></td><td></td></tr>
                                    <tr><td></td><td class="mono">MODELED_BY</td><td>字符串</td><td class="mono val"></td><td class="acc"><svg class="i20"><use href="#lock" /></svg>完全</td><td>用户定义的</td><td class="acc"></td><td></td></tr>
                                    <tr><td></td><td class="mono">D</td><td>实数</td><td class="mono val">12.000000</td><td class="acc"><svg class="i20"><use href="#lock" /></svg>完全</td><td>用户定义的</td><td class="acc">大径</td><td></td></tr>
                                    <tr><td></td><td class="mono">RP</td><td>实数</td><td class="mono val">10.000000</td><td class="acc"><svg class="i20"><use href="#lock" /></svg>完全</td><td>用户定义的</td><td class="acc">前角</td><td></td></tr>
                                    <tr><td></td><td class="mono">N</td><td>实数</td><td class="mono val">4.000000</td><td class="acc"><svg class="i20"><use href="#lock" /></svg>完全</td><td>用户定义的</td><td class="acc">槽数</td><td></td></tr>
                                </tbody>
                            </table>
                            <div class="grid-rest"></div>
                            <div class="hscroll"><i class="tri-left"></i><div class="hthumb">····</div><i class="tri-right"></i></div>
                        </div>
                        <div class="movers">
                            <button class="up" aria-label="上移"></button>
                            <button class="down" aria-label="下移"></button>
                        </div>
                    </div>
                </div>
                <div class="actions">
                    <button class="sq" aria-label="添加"><svg class="i24"><use href="#plus" /></svg></button>
                    <button class="sq" aria-label="删除"><svg class="i24"><use href="#minus" /></svg></button>
                    <button class="btn prop">属性...</button>
                    <button class="sq" aria-label="列"><svg class="i24"><use href="#cols" /></svg></button>
                    <button class="sq" aria-label="查找"><svg class="i20"><use href="#find" /></svg></button>
                </div>
                <div class="confirm">
                    <button class="btn primary">确定</button>
                    <button class="btn">重置</button>
                    <button class="btn">取消</button>
                </div>
            </div>
        </section>

        <footer class="taskbar">
            <button class="start" aria-label="开始"><svg><use href="#orb" /></svg></button>
            <div class="tasks">
                <button class="task"><svg class="i28"><use href="#cube" /></svg>SIZHUI (活动的) ...</button>
                <button class="task"><svg class="i28"><use href="#cube" /></svg>关系</button>
                <button class="task alone"><svg class="i28"><use href="#browser" /></svg>proe5.0 角度关...</button>
            </div>
            <div class="tray">
                <svg class="i16"><use href="#tr-shield" /></svg>
                <svg class="i16"><use href="#tr-plus" /></svg>
                <svg class="i16"><use href="#tr-net" /></svg>
                <svg class="i16"><use href="#tr-vol" /></svg>
            </div>
            <div class="clock"><span>22:43</span><span>2017/10/30 星期一</span></div>
            <div class="peek"></div>
        </footer>

        <div class="forum">
            <svg class="forum-logo" viewBox="0 0 60 60">
                <ellipse cx="20" cy="22" rx="13" ry="22" transform="rotate(-35 20 22)" fill="none" stroke="#66728a" stroke-width="3" />
                <ellipse cx="40" cy="38" rx="13" ry="20" transform="rotate(25 40 38)" fill="none" stroke="#b04a6c" stroke-width="4" />
                <path d="M10 40q15-2 24 14" fill="none" stroke="#66728a" stroke-width="2" />
            </svg>
            <b>野火论坛</b>
            <span>www.proewildfire.cn</span>
        </div>
    </div>
</body>

</html>
```

FILE: styles.css
```css
* {
    box-sizing: border-box;
}

body {
    margin: 0;
    font: 12px/16px "Open Sans", "Noto Sans CJK SC", sans-serif;
    color: #2b3338;
    overflow: hidden;
}

a {
    color: inherit;
    text-decoration: none;
}

button,
input,
select,
textarea {
    font: inherit;
    color: inherit;
    margin: 0;
    padding: 0;
    border: 0;
    background: none;
}

svg {
    display: block;
    flex: none;
}

.sprite {
    position: absolute;
    width: 0;
    height: 0;
}

.tint {
    fill: none;
    stroke: currentColor;
    stroke-width: 2;
}

.i8 { width: 8px; height: 8px; }
.i9 { width: 9px; height: 9px; }
.i12 { width: 12px; height: 12px; }
.i14 { width: 14px; height: 14px; }
.i16 { width: 16px; height: 16px; }
.i18 { width: 18px; height: 18px; }
.i20 { width: 20px; height: 20px; }
.i24 { width: 24px; height: 24px; }
.i28 { width: 28px; height: 28px; }

.mono {
    font-family: "Liberation Mono", "Noto Sans CJK SC", monospace;
    font-size: 10px;
}

.desktop {
    position: relative;
    height: 100vh;
    overflow: hidden;
    background: #fff;
}

/* small triangles */
.dd {
    border: 4px solid transparent;
    border-top-color: #111;
    border-bottom: 0;
}

.dd-grey {
    border-width: 3px 3px 0;
    border-top-color: #666;
}

.dd-big {
    border-width: 6px 6px 0;
    border-top-color: #888;
}

.tri-up {
    border: 4px solid transparent;
    border-bottom: 6px solid #444;
    border-top: 0;
}

.tri-down {
    border: 4px solid transparent;
    border-top: 6px solid #444;
    border-bottom: 0;
}

.tri-left {
    border: 4px solid transparent;
    border-right: 5px solid #8aa2b0;
    border-left: 0;
}

.tri-right {
    border: 4px solid transparent;
    border-left: 5px solid #8aa2b0;
    border-right: 0;
}

/* browser */
.browser {
    position: absolute;
    inset: 0 0 40px;
    display: flex;
    flex-direction: column;
    background: #fff;
    color: #444;
}

.b-title {
    display: flex;
    justify-content: flex-end;
    align-items: center;
    gap: 10px;
    height: 29px;
    padding: 2px 12px 0 0;
    background: #ebebeb;
    border-bottom: 1px solid #d2d2d2;
}

.b-address {
    display: flex;
    align-items: center;
    height: 36px;
    padding: 0 12px 0 1399px;
    border-bottom: 2px solid #dfdfdf;
    gap: 5px;
}

.b-chev {
    display: flex;
    align-items: center;
    height: 20px;
    padding: 0 4px;
    margin-left: 1px;
    border: solid #ddd;
    border-width: 0 1px;
}

.b-search {
    flex: 1;
    min-width: 0;
    padding-left: 8px;
    font-size: 14px;
}

.b-search::placeholder {
    color: #999;
    opacity: 1;
}

.b-line {
    width: 1px;
    height: 20px;
    margin: 0 6px 0 2px;
    background: #ddd;
}

.b-address .i18 {
    margin: 0 7px 0 0;
}

.b-address .dd {
    margin: 0 12px 0 0;
}

.b-marks {
    display: flex;
    justify-content: flex-end;
    align-items: center;
    gap: 10px;
    height: 30px;
    padding: 0 12px 2px 0;
    border-bottom: 1px solid #d2d2d2;
}

.b-marks a {
    display: flex;
    align-items: center;
    gap: 5px;
}

.b-dots {
    height: 14px;
    border-left: 2px dotted #bbb;
}

.b-body {
    flex: 1;
    display: flex;
    min-height: 0;
}

.b-page {
    flex: 1;
}

.b-user {
    display: flex;
    justify-content: flex-end;
    align-items: center;
    gap: 5px;
    height: 85px;
    padding-right: 28px;
    font: 18px/24px "Liberation Sans", sans-serif;
    color: #333;
    border-bottom: 2px solid #ccc;
}

.b-user a {
    text-decoration: underline;
}

.b-scroll {
    width: 18px;
    display: flex;
    flex-direction: column;
    align-items: center;
    padding: 6px 0;
    background: #efefef;
}

.b-track {
    flex: 1;
    align-self: stretch;
    padding-top: 276px;
}

.b-thumb {
    height: 313px;
    margin: 0 2px;
    background: #a6a6a6;
}

.b-status {
    display: flex;
    justify-content: flex-end;
    align-items: center;
    gap: 12px;
    height: 24px;
    padding: 0 5px 2px 0;
    background: #f9f9f9;
    border-top: 1px solid #ddd;
    color: #666;
}

.b-status a,
.b-zoom {
    display: flex;
    align-items: center;
    gap: 6px;
}

.b-icons {
    display: flex;
    gap: 28px;
    padding: 0 6px 0 9px;
}

.b-tools {
    display: flex;
    gap: 23px;
    padding: 0 5px 0 4px;
}

.bubble {
    position: absolute;
    top: 2px;
    right: -26px;
    width: 46px;
    height: 46px;
    padding-left: 7px;
    border: 2px solid #fff;
    border-radius: 50%;
    background: linear-gradient(#8be88a, #2fb34a);
    box-shadow: 0 0 3px #555;
    color: #fff;
    font: bold 12px/42px "Liberation Serif", serif;
}

/* aero windows */
.win {
    position: absolute;
    display: flex;
    flex-direction: column;
    padding: 0 6px 7px;
    border: 1px solid #4e5a60;
    border-radius: 7px;
}

.main-win {
    inset: 0 756px 39px 0;
    background: linear-gradient(90deg, #f2fdff, #e6fafa 50%, #f3ffff 80%, #d9eef0 92%, #fff);
}

.dialog {
    top: 126px;
    left: 920px;
    right: 131px;
    padding-bottom: 6px;
    background: linear-gradient(90deg, #a3c2e2, #8db2dc 190px, #d5ffff 196px, #fff 250px);
}

.titlebar {
    position: relative;
    display: flex;
    align-items: center;
    gap: 6px;
    height: 28px;
}

.dialog > .titlebar {
    margin: 0 -6px;
    padding: 0 6px;
    border-radius: 6px 6px 0 0;
    background: linear-gradient(90deg, #f0ffff, #fff 15%, #e2ffff 26%, #fff 30%, #f4f4f4 42%, #fff 48%, #fff);
}

.title {
    flex: 1;
    font-size: 13px;
    line-height: 20px;
    color: #111;
    text-shadow: 0 0 6px #fff;
}

.dialog .title {
    font-size: 12px;
}

/* content that shows through the glass */
.glass-tab {
    position: absolute;
    top: 1px;
    left: 312px;
    width: 231px;
    height: 27px;
    background: linear-gradient(90deg, #2fd79c, #3be0b4 60%, #3fc8ee);
    box-shadow: none;
    filter: blur(2px);
}

.glass-tab::before {
    content: "";
    display: block;
    width: 165px;
    height: 10px;
    margin: 9px 0 0 28px;
    background: #7ff5d8;
    filter: blur(3px);
}

.glass-links {
    position: absolute;
    z-index: 1;
    top: 5px;
    right: 182px;
    width: 66px;
    height: 14px;
    background: repeating-linear-gradient(90deg, #9cc8f0 0 12px, #d6eafa 12px 18px);
    box-shadow: 80px 0 0 -3px #b4d6f4, 130px 0 0 -4px #c4e0f8;
    filter: blur(3px);
    opacity: .7;
    pointer-events: none;
}

.winbtns {
    display: flex;
    align-self: flex-start;
    height: 19px;
    border: 1px solid #8a979d;
    border-top: 0;
    border-radius: 0 0 5px 5px;
    background: #f8ffff99;
}

.winbtns button {
    display: flex;
    align-items: center;
    justify-content: center;
    width: 27px;
    border-right: 1px solid #aab5ba;
}

.winbtns .wide {
    width: 47px;
    border-right: 0;
}

.client {
    flex: 1;
    display: flex;
    flex-direction: column;
    min-height: 0;
    border: 1px solid #7a8d98;
    background: #d9e7f0;
}

.menubar {
    display: flex;
    align-items: center;
    gap: 15px;
    height: 32px;
    padding: 4px 7px 0;
    background: linear-gradient(#f4f8fc, #e7edf3);
    border-bottom: 1px solid #b4cbdb;
}

.dialog .menubar {
    gap: 14px;
    padding: 2px 18px 0;
}

/* toolbars */
.toolbars {
    height: 61px;
    padding: 1px 0 0;
    background: #dce9f2;
    border-bottom: 1px solid #b4cbdb;
}

.toolrow {
    display: flex;
    align-items: center;
    height: 28px;
}

.grip {
    position: relative;
    flex: none;
    width: 14px;
    height: 26px;
}

.grip::before {
    content: "";
    display: block;
    width: 4px;
    height: 26px;
    margin-left: 5px;
    border: dotted #8b9eac;
    border-width: 0 1px;
}

.toolrow button,
.dgroup button {
    flex: none;
    display: flex;
    align-items: center;
    justify-content: center;
    width: 26px;
    height: 26px;
    margin: 1px;
    border: 1px solid transparent;
    border-radius: 2px;
    color: #333;
}

.toolrow svg,
.dgroup svg {
    width: 22px;
    height: 22px;
}

.toolrow .low-detail,
.dgroup .low-detail {
    width: 18px;
    height: 18px;
}

.toolrow .on {
    border-color: #7f96a8;
    background: linear-gradient(#c6dcec, #b5dcf4);
}

.toolrow .off,
.dgroup .off {
    color: #8f999f;
}

.toolrow .dark {
    color: #6a7378;
}

.toolrow .fade {
    filter: grayscale(1);
    opacity: .6;
}

.toolrow .boxed {
    border: 1px solid #b4c0c8;
}

.drop {
    display: flex;
    align-items: center;
    justify-content: center;
    flex: none;
    width: 13px;
    height: 26px;
}

.drop::before {
    content: "";
    border: 3px solid transparent;
    border-top: 4px solid #222;
    border-bottom: 0;
}

.drop.off::before {
    border-top-color: #a3adb3;
}

.drop.framed {
    width: 18px;
    border: 1px solid #b4c5d0;
    border-left: 0;
    border-radius: 0 3px 3px 0;
}

/* message line */
.message {
    display: flex;
    align-items: center;
    height: 29px;
    padding: 0 0 3px 2px;
    background: #dce9f2;
}

.message span {
    padding-left: 1px;
    width: 712px;
}

.msg-thermo {
    width: 31px;
    padding: 0 3px;
    border: solid #b9c8d2;
    border-width: 0 1px;
}

.msg-filter {
    width: 200px;
    height: 20px;
    margin-left: 101px;
    background: #fff;
    border: 1px solid #9fb3c0;
    border-radius: 2px;
}

.workspace {
    flex: 1;
    display: flex;
    min-height: 0;
}

.side {
    display: flex;
    flex-direction: column;
    width: 295px;
    padding-top: 3px;
}

.tabs {
    display: flex;
    height: 25px;
    padding-left: 7px;
}

.tab {
    width: 42px;
    padding: 3px 0 0 12px;
    background: linear-gradient(#b4cce0, #d3e2ec);
    clip-path: polygon(0 0, 32px 0, 100% 100%, 0 100%);
}

.tab.current {
    background: linear-gradient(#fff, #f2f7fa);
}

.panel {
    flex: 1;
    display: flex;
    flex-direction: column;
    min-height: 0;
    padding: 0 7px 7px;
    border: solid #a6bbc9;
    border-width: 1px 1px 0 0;
    border-radius: 0 4px 0 0;
}

.panel-head {
    display: flex;
    align-items: center;
    gap: 3px;
    height: 30px;
    padding: 0 2px 2px 20px;
    margin-left: -7px;
    background: linear-gradient(90deg, #f3f6f9, #d9e7f0 90%);
}

.panel-head b {
    flex: 1;
    padding-left: 6px;
    font-size: 13px;
}

.panel-head .dd {
    margin-right: 6px;
}

.panel-head .dd:last-child {
    margin-right: 0;
}

.tree {
    flex: 1;
    padding: 1px 5px;
    font-size: 13px;
    line-height: 20px;
    background: #fff;
    border: 1px solid #86a2b4;
    border-radius: 4px;
}

.root {
    display: flex;
    align-items: center;
    gap: 3px;
    height: 20px;
}

.root span {
    padding: 0 1px;
    line-height: 18px;
    background: #a5e2e8;
    color: #111;
}

.tree ul {
    margin: 0 0 0 7px;
    padding: 0;
    list-style: none;
}

.tree li {
    display: flex;
    align-items: center;
    gap: 4px;
    height: 20px;
    border-left: 1px dotted #999;
}

.tree li:last-child {
    border-image: linear-gradient(#999 50%, transparent 50%) 1;
}

.tree li::before {
    content: "";
    width: 9px;
    border-top: 1px dotted #999;
    margin-right: -2px;
}

.tree li:nth-last-child(-n+2) {
    font-size: 12px;
}

.tree .fresh {
    gap: 3px;
}

.tree .fresh .i8 {
    align-self: flex-start;
    margin: 3px -2px 0 0;
}

.tree .small {
    padding: 2px;
}

.splitter {
    width: 9px;
    padding-top: 343px;
}

.splitter i {
    display: flex;
    align-items: center;
    justify-content: center;
    height: 92px;
    border: 1px solid #c2d2de;
    border-right: 0;
    border-radius: 4px 0 0 4px;
}

.splitter i::before {
    content: "";
    width: 3px;
    height: 3px;
    background: #345;
}

.splitter .low {
    margin-top: 11px;
    border: 1px solid #93a9b9;
    border-width: 1px 0 1px 2px;
}

/* sketch area */
.sketch {
    flex: 1 1 0;
    min-width: 0;
    height: 100%;
    background: #7b9abf;
    fill: none;
    stroke-width: 1;
}

.sketch .ref {
    stroke: #81664f;
}

.sketch .thick {
    stroke-width: 2;
}

.sketch .weak {
    stroke: #6a7890;
}

.sketch .center {
    stroke: #c09a58;
    stroke-dasharray: 6 3;
}

.sketch .bright {
    stroke: #f4bb78;
    stroke-width: 2;
    stroke-dasharray: 8 2;
}

.sketch .low {
    stroke: #cf8e3e;
    stroke-dasharray: 6 4;
}

.sketch .geom {
    stroke: #fbff38;
}

.sketch .dim {
    stroke: #f4c877;
}

.sketch .thin {
    stroke: #d2c29a;
}

.sketch .node {
    stroke: #ffd45e;
}

.sketch .lab {
    font: 14px "Liberation Mono", monospace;
    fill: #71614f;
}

.sketch .lit {
    fill: #f0cf8c;
}

.sketch .dull {
    fill: #697892;
}

.rightbar {
    width: 41px;
    background: #d9e7f0;
}

/* relations dialog */
.scope {
    margin: 0 6px 0 4px;
    padding: 0 7px;
    height: 50px;
    border: 1px solid #86a2b8;
    border-bottom: 0;
    border-radius: 4px;
    border-image: linear-gradient(#86a2b8 40%, transparent 90%) 1;
}

.scope legend {
    margin-left: 2px;
    padding: 0 5px;
    font-size: 13px;
    line-height: 14px;
    color: #456f96;
}

.scope-row {
    display: flex;
    align-items: center;
    gap: 4px;
    padding-top: 3px;
}

.combo {
    position: relative;
    flex: 1;
    display: flex;
}

.combo::after {
    content: "";
    position: absolute;
    right: 5px;
    top: 50%;
    margin-top: -2px;
    border: 3px solid transparent;
    border-top: 4px solid #333;
    border-bottom: 0;
    pointer-events: none;
}

.combo.off::after {
    border-top-color: #b0b8bd;
}

.combo select {
    width: 100%;
    height: 20px;
    padding-left: 4px;
    appearance: none;
    background: #fff;
    border: 1px solid #8fa9ba;
    border-radius: 3px;
    color: #222;
    opacity: 1;
}

.combo.off select {
    color: #a0a0a0;
    border-color: #b6c3cb;
}

.combo-type {
    flex: 287 1 0;
    margin-right: 2px;
}

.combo-name {
    flex: 507 1 0;
}

.combo-name select {
    height: 26px;
}

.sq {
    display: flex;
    align-items: center;
    justify-content: center;
    flex: none;
    width: 26px;
    height: 26px;
    background: linear-gradient(#fff, #e3eff8);
    border: 1px solid #8fa9ba;
    border-radius: 3px;
    color: #222;
}

.sq.flat {
    background: #cfe0eb;
    border-color: #b0c4d1;
}

.bar {
    display: flex;
    align-items: center;
    gap: 5px;
    height: 16px;
    margin: 4px 2px 0 1px;
    padding-left: 2px;
    background: #323c41;
    color: #fff;
    font-size: 12px;
    font-weight: normal;
}

.bar::before {
    content: "";
    border: 6px solid transparent;
    border-top: 7px solid #fff;
    border-bottom: 0;
}

.dtools {
    display: flex;
    height: 37px;
    margin-left: 3px;
    padding-top: 1px;
}

.dgroup {
    display: flex;
    align-items: center;
    height: 35px;
    padding: 0 4px 0 3px;
    border: solid #6d93aa;
    border-width: 0 1px 1px 0;
}

.editor {
    display: flex;
    margin: 1px 6px 0 3px;
}

.keys {
    width: 28px;
}

.keys div {
    padding: 4px 0 3px;
    border: solid #6d93aa;
    border-width: 0 1px 1px 0;
}

.keys button {
    display: block;
    width: 27px;
    height: 18px;
    font: 12px/18px "Liberation Mono", monospace;
    color: #111;
}

.keys div:last-child {
    height: 27px;
}

.editor textarea {
    flex: 1;
    height: 270px;
    padding: 3px;
    font: 10px/16px "Liberation Mono", monospace;
    color: #444;
    background: #fff;
    border: 1px solid #8fb0c4;
    border-radius: 3px;
    resize: none;
    outline: 0;
}

.params {
    margin: 2px 6px 0 4px;
    padding: 1px 0 0 7px;
    border: solid #9fb8c8;
    border-width: 1px 1px 0;
    border-radius: 3px 3px 0 0;
}

.filter {
    display: flex;
    align-items: center;
    height: 20px;
    padding-right: 6px;
    margin-left: -1px;
}

.filter label {
    padding-right: 4px;
}

.filter .sub {
    padding: 0 1px 0 6px;
}

.grid-row {
    display: flex;
    margin-top: 4px;
}

.grid {
    flex: 1;
    height: 275px;
    display: flex;
    flex-direction: column;
    overflow: hidden;
    background: linear-gradient(90deg, #fff, #e6edf3 20px, #fff 20px);
    border: 1px solid #86a2b4;
    border-radius: 4px;
}

.grid table {
    width: 100%;
    border-collapse: separate;
    border-spacing: 0;
    table-layout: fixed;
}

.c-handle {
    width: 20px;
}

.c-std {
    width: 116px;
}

.grid th {
    height: 21px;
    padding: 0 0 0 12px;
    text-align: left;
    font-size: 12px;
    color: #111;
    background: linear-gradient(#fff 40%, #deebf5);
    border: solid #b5cad8;
    border-width: 0 1px 1px 0;
}

.grid td {
    height: 25px;
    padding: 0 2px;
    color: #888;
    background: #fff;
    border: solid #dae3e9;
    border-width: 0 1px 1px 0;
}

.grid tr > :last-child {
    border-right: 0;
}

.grid td:first-child {
    background: linear-gradient(#fff, #dfe8ef);
    border-bottom-color: #a9bfce;
}

.grid .sel {
    background: #a9e3e8;
    color: #333;
}

.grid .val,
.grid .acc {
    color: #111;
}

.acc svg {
    display: inline-block;
    vertical-align: middle;
    margin-right: -1px;
}

.grid-rest {
    flex: 1;
}

.hscroll {
    display: flex;
    align-items: center;
    height: 20px;
    padding: 0 6px 0 5px;
    margin-left: 20px;
    background: #fff;
    border-top: 1px solid #cfdbe3;
}

.hthumb {
    flex: 1;
    height: 12px;
    margin: 0 32px 0 6px;
    border: 1px solid #86a9ba;
    border-radius: 6px;
    background: linear-gradient(#f2f8fc, #c5d9e7);
    text-align: center;
    line-height: 9px;
    font-size: 9px;
}

.movers {
    width: 30px;
    display: flex;
    flex-direction: column;
    align-items: center;
    gap: 9px;
    padding-top: 118px;
}

.up {
    border: 7px solid transparent;
    border-bottom: 15px solid #8f9ba3;
    border-top: 0;
}

.down {
    border: 7px solid transparent;
    border-top: 15px solid #0c3a8c;
    border-bottom: 0;
}

.actions {
    display: flex;
    align-items: center;
    gap: 2px;
    height: 26px;
    margin: 3px 14px 0 10px;
}

.actions .prop {
    width: 56px;
    margin: 0 5px 0 auto;
}

.actions .sq:last-child {
    margin-left: 3px;
}

.btn {
    width: 62px;
    height: 20px;
    font-size: 12px;
    line-height: 16px;
    color: #111;
    background: linear-gradient(#fff, #e0edf7);
    border: 1px solid #8fa9ba;
    border-radius: 3px;
}

.primary {
    background: linear-gradient(#f4fbff, #b4dcf4);
    border: 2px solid #7393a8;
    line-height: 14px;
}

.confirm {
    display: flex;
    justify-content: flex-end;
    gap: 14px;
    padding: 16px 7px 6px;
}

/* taskbar */
.taskbar {
    position: absolute;
    inset: auto 0 0;
    display: flex;
    align-items: center;
    height: 40px;
    padding-bottom: 1px;
    background: linear-gradient(90deg, #a0b5ca, #86a2bf 30%, #84a1be 70%, #8fa9c4);
    border-top: 2px solid #b6c9da;
    box-shadow: 0 -1px #3c5164;
    color: #fff;
}

.start {
    width: 36px;
    height: 36px;
    margin: 0 15px 0 9px;
}

.start svg {
    width: 36px;
    height: 36px;
}

.tasks {
    display: flex;
    align-self: stretch;
    margin-top: -1px;
}

.task {
    display: flex;
    align-items: center;
    gap: 5px;
    width: 160px;
    padding-left: 10px;
    border: 1px solid #566b80;
    border-right: 0;
    border-radius: 3px;
    background: linear-gradient(#c2d0dd88, #95adc588 50%, #8ba5c088);
    box-shadow: inset 1px 1px #ffffff66;
    white-space: nowrap;
}

.task:nth-child(2) {
    border-left-color: #93a9be;
    border-right: 1px solid #566b80;
}

.alone {
    margin-left: 2px;
    border-right: 1px solid #566b80;
    background: linear-gradient(90deg, #9fb4c800 20px, #4c7058 40px, #2c5a3c 56px, #4c7058 64px, #93abc2 76px);
}

.tray {
    display: flex;
    gap: 9px;
    margin: 3px 3px 0 auto;
}

.clock {
    display: flex;
    flex-direction: column;
    align-items: center;
    width: 122px;
    line-height: 18px;
}

.peek {
    width: 12px;
    height: 100%;
    border-left: 1px solid #566b80;
    background: linear-gradient(#b9c9d9, #7f9cbb);
}

/* forum mark over the bottom right corner */
.forum {
    position: absolute;
    right: 0;
    bottom: 5px;
    width: 212px;
    height: 58px;
    padding: 0 8px 0 70px;
    display: flex;
    flex-direction: column;
    align-items: flex-start;
    background: linear-gradient(transparent 23px, #ffffff44 23px);
    pointer-events: none;
}

.forum-logo {
    position: absolute;
    left: 0;
    top: 0;
    width: 58px;
    height: 56px;
    opacity: .7;
}

.forum b {
    font-size: 29px;
    line-height: 34px;
    color: #3fa05c;
    opacity: .65;
}

.forum span {
    font: 15px/20px "Liberation Sans", sans-serif;
    color: #60788c;
    opacity: .6;
}
```
